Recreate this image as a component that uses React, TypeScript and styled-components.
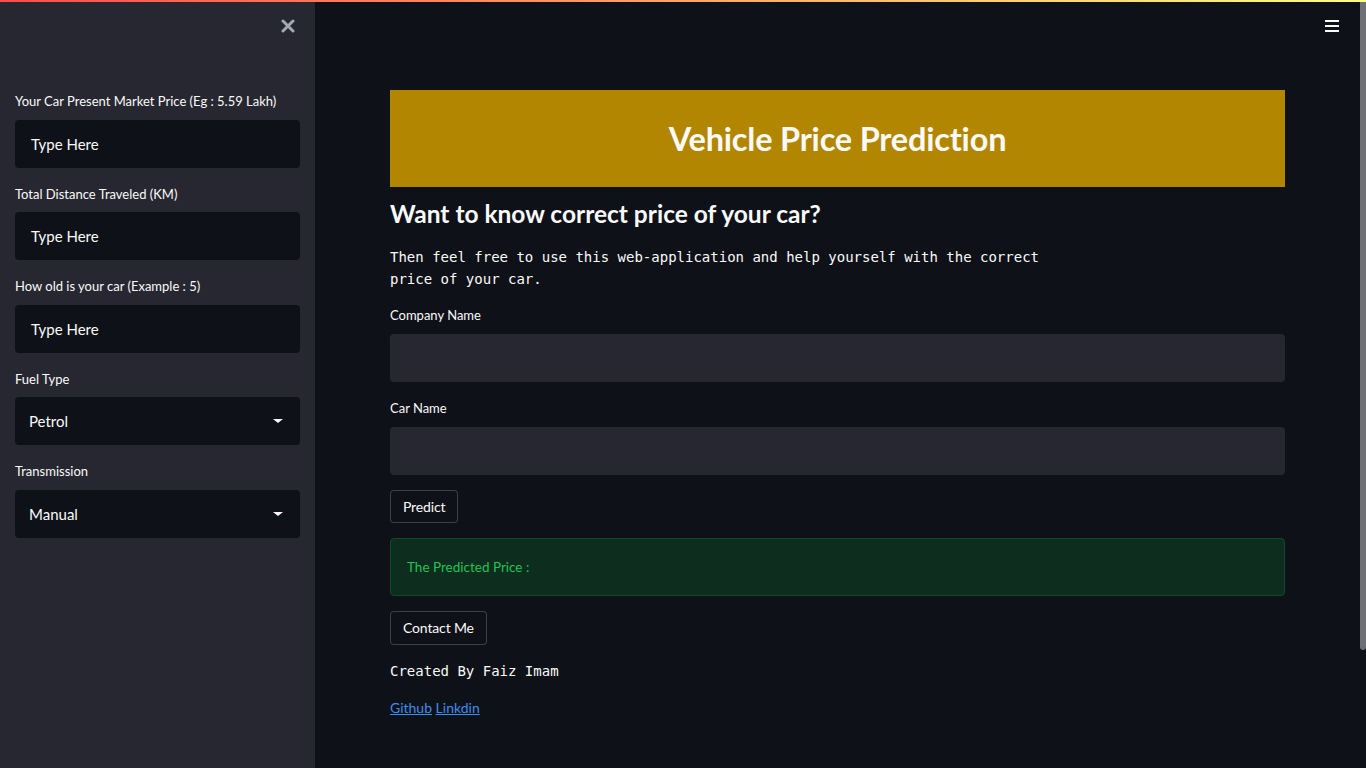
import React from "react";
import styled, { createGlobalStyle } from "styled-components";

const Global = createGlobalStyle`
  html, body { margin: 0; padding: 0; background: #0e1117; overflow: hidden; }
  body { font-family: "Lato", "Open Sans", sans-serif; color: #fafafa; }
  * { box-sizing: border-box; }
`;

const Page = styled.div`
  width: 1366px;
  height: 768px;
  display: flex;
  flex-direction: column;
  position: relative;
`;

const Decoration = styled.div`
  height: 2px;
  background: linear-gradient(90deg, #ff4b4b, #fffd80);
`;

const Body = styled.div`
  flex: 1;
  display: flex;
`;

const Sidebar = styled.aside`
  width: 315px;
  background: #262730;
  display: flex;
  flex-direction: column;
  padding: 0 15px;
`;

const SidebarTop = styled.div`
  height: 89px;
  display: flex;
  justify-content: flex-end;
  align-items: flex-start;
  padding-top: 17px;
  padding-right: 5px;
`;

const CloseBtn = styled.div`
  width: 14px;
  height: 14px;
  display: flex;
  color: #a3a8b4;
`;

const SideFields = styled.div`
  display: flex;
  flex-direction: column;
  gap: 16px;
`;

const Field = styled.div`
  display: flex;
  flex-direction: column;
`;

const Label = styled.label`
  font-size: 13px;
  line-height: 20px;
  height: 20px;
  margin-bottom: 8.5px;
  color: #fafafa;
`;

const SideInput = styled.div`
  height: 48px;
  background: #0e1117;
  border-radius: 4px;
  display: flex;
  align-items: center;
  padding: 0 16px;
  font-size: 15px;
  color: #fafafa;
`;

const SelectBox = styled(SideInput)`
  padding: 0 16px 0 14px;
  justify-content: space-between;
`;

const Caret = styled.span`
  width: 0;
  height: 0;
  border-left: 5px solid transparent;
  border-right: 5px solid transparent;
  border-top: 4px solid #fafafa;
  margin-right: 1px;
`;

const Main = styled.main`
  flex: 1;
  display: flex;
  flex-direction: column;
  position: relative;
`;

const MainTop = styled.div`
  height: 88px;
  display: flex;
  justify-content: flex-end;
  padding: 18px 27px 0 0;
`;

const Burger = styled.div`
  width: 14px;
  display: flex;
  flex-direction: column;
  gap: 3px;
  span {
    display: block;
    height: 2px;
    background: #fafafa;
  }
`;

const Content = styled.div`
  width: 895px;
  margin-left: 75px;
  display: flex;
  flex-direction: column;
`;

const Banner = styled.div`
  height: 97px;
  background: #b38600;
  display: flex;
  align-items: center;
  justify-content: center;
`;

const Title = styled.h1`
  margin: 0;
  font-size: 32.5px;
  font-weight: 700;
  color: #fafafa;
  letter-spacing: -0.2px;
`;

const Sub = styled.h3`
  margin: 12px 0 0;
  font-size: 24.5px;
  line-height: 30px;
  font-weight: 700;
`;

const Mono = styled.p`
  margin: 17px 0 0;
  width: 680px;
  font-family: "DejaVu Sans Mono", "Liberation Mono", monospace;
  font-size: 14px;
  line-height: 22px;
`;

const MainFields = styled.div`
  display: flex;
  flex-direction: column;
  gap: 16.5px;
  margin-top: 15px;
`;

const MainInput = styled.div`
  height: 48px;
  background: #262730;
  border-radius: 4px;
`;

const ButtonRow = styled.div`
  display: flex;
  margin-top: 15px;
`;

const Button = styled.button<{ $h: number }>`
  height: ${(p) => p.$h}px;
  padding: 0 12px;
  background: #0e1117;
  border: 1px solid rgba(250, 250, 250, 0.2);
  border-radius: 4px;
  color: #fafafa;
  font-family: "Lato", sans-serif;
  font-size: 14px;
  letter-spacing: -0.15px;
`;

const Success = styled.div`
  height: 58px;
  margin-top: 15px;
  background: #0d2d1e;
  border: 1px solid #124a26;
  border-radius: 4px;
  display: flex;
  align-items: center;
  padding: 0 16px;
  color: #21c354;
  font-size: 13.5px;
`;

const Created = styled.p`
  margin: 16px 0 0;
  font-family: "DejaVu Sans Mono", "Liberation Mono", monospace;
  font-size: 14px;
  line-height: 20px;
`;

const Links = styled.p`
  margin: 17px 0 0;
  font-size: 14px;
  line-height: 20px;
  a {
    color: #3b8ef0;
    text-decoration: underline;
  }
`;

const Thumb = styled.div`
  position: absolute;
  right: 0;
  top: 0;
  width: 6px;
  height: 648px;
  background: #6f7075;
  border-radius: 0 0 3px 3px;
`;

const sideFields: { label: string; value: string; select?: boolean }[] = [
  { label: "Your Car Present Market Price (Eg : 5.59 Lakh)", value: "Type Here" },
  { label: "Total Distance Traveled (KM)", value: "Type Here" },
  { label: "How old is your car (Example : 5)", value: "Type Here" },
  { label: "Fuel Type", value: "Petrol", select: true },
  { label: "Transmission", value: "Manual", select: true },
];

export default function App() {
  return (
    <>
      <Global />
      <Page>
        <Decoration />
        <Body>
          <Sidebar>
            <SidebarTop>
              <CloseBtn>
                <svg width="14" height="14" viewBox="0 0 14 14">
                  <path d="M2 2 L12 12 M12 2 L2 12" stroke="currentColor" strokeWidth="3" strokeLinecap="round" />
                </svg>
              </CloseBtn>
            </SidebarTop>
            <SideFields>
              {sideFields.map((f) => (
                <Field key={f.label}>
                  <Label>{f.label}</Label>
                  {f.select ? (
                    <SelectBox>
                      <span>{f.value}</span>
                      <Caret />
                    </SelectBox>
                  ) : (
                    <SideInput>{f.value}</SideInput>
                  )}
                </Field>
              ))}
            </SideFields>
          </Sidebar>
          <Main>
            <MainTop>
              <Burger>
                <span />
                <span />
                <span />
              </Burger>
            </MainTop>
            <Content>
              <Banner>
                <Title>Vehicle Price Prediction</Title>
              </Banner>
              <Sub>Want to know correct price of your car?</Sub>
              <Mono>
                Then feel free to use this web-application and help yourself with the correct price of your car.
              </Mono>
              <MainFields>
                <Field>
                  <Label>Company Name</Label>
                  <MainInput />
                </Field>
                <Field>
                  <Label>Car Name</Label>
                  <MainInput />
                </Field>
              </MainFields>
              <ButtonRow>
                <Button $h={33}>Predict</Button>
              </ButtonRow>
              <Success>The Predicted Price :</Success>
              <ButtonRow>
                <Button $h={34}>Contact Me</Button>
              </ButtonRow>
              <Created>Created By Faiz Imam</Created>
              <Links>
                <a href="#">Github</a> <a href="#">Linkdin</a>
              </Links>
            </Content>
            <Thumb />
          </Main>
        </Body>
      </Page>
    </>
  );
}
